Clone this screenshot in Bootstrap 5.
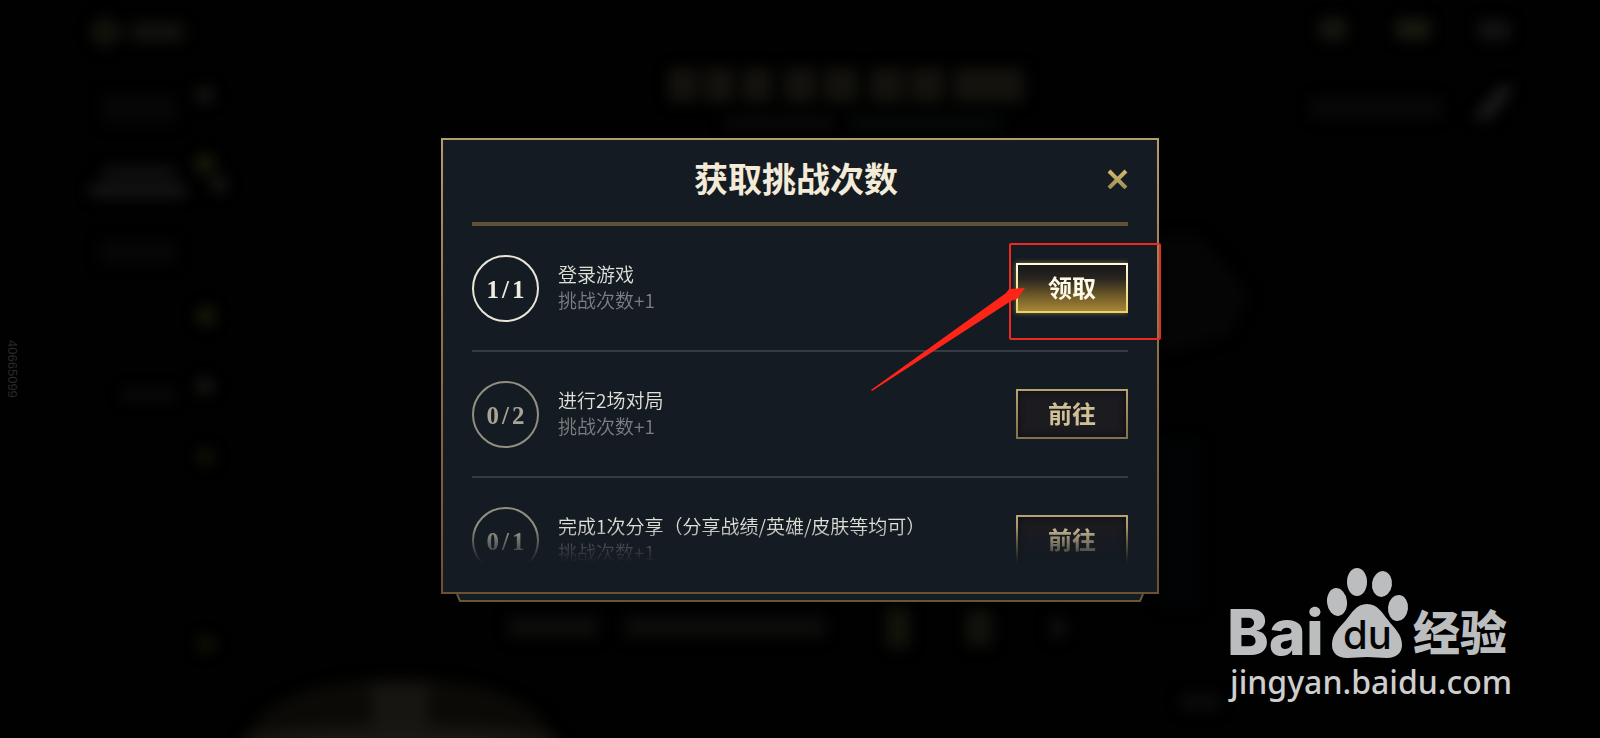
<!DOCTYPE html>
<html lang="zh-CN">
<head>
<meta charset="utf-8">
<meta name="viewport" content="width=device-width, initial-scale=1">
<title>获取挑战次数</title>
<link href="https://cdn.jsdelivr.net/npm/bootstrap@5.3.0/dist/css/bootstrap.min.css" rel="stylesheet">
<style>
  body { background: #010101; font-family: "Noto Sans CJK SC", sans-serif; }
  .scene { isolation: isolate; padding-top: 2px; }
  .backdrop-art { z-index: -1; }
  .serial { left: 3px; top: 340px; writing-mode: vertical-rl; font: 13px/18px "Liberation Sans", sans-serif; color: #2a2a2a; }

  .quest { width: 100%; max-width: 718px; }
  .quest-panel { border: 2px solid; border-image: linear-gradient(#b49c6c, #8e7747 40%, #6a5230) 1; background: #141b23; padding: 0 29px 27px; }
  .quest-head { height: 82px; padding-bottom: 6px; }
  .quest-title { font-size: 34px; line-height: 40px; font-weight: 700; color: #f3ead8; padding-left: 14px; }
  .quest-close { width: 22px; height: 22px; }
  .quest-rule { height: 4px; background: #5e5337; }
  .quest-list { max-height: 339px; -webkit-mask-image: linear-gradient(#000 calc(100% - 38px), transparent calc(100% - 2px)); mask-image: linear-gradient(#000 calc(100% - 38px), transparent calc(100% - 2px)); }
  .quest-row { padding: 29px 0 28px; border-bottom: 2px solid #343b43; gap: 19px; }
  .quest-count { width: 67px; height: 67px; padding-top: 4px; border: 2px solid #918f7e; font: 700 25px/28px "Liberation Serif", serif; color: #a8a596; }
  .quest-count span { padding: 0 3px; }
  .quest-count.is-done { border-color: #e8e5d5; color: #efecdf; }
  .quest-text { padding-bottom: 2px; font-size: 19px; line-height: 26px; font-weight: 350; color: #dfe0d6; }
  .quest-note { color: #7d7f81; }
  .btn-quest { width: 112px; height: 50px; padding: 0 0 2px; border: 2px solid; border-radius: 0; border-image: linear-gradient(#b6a274, #84704a) 1; background: #1c1b20; box-shadow: inset 0 0 6px 1px #0e0f14; color: #cfc096; font-size: 24px; line-height: 42px; font-weight: 700; }
  .btn-quest:hover { color: #e6d7ab; }
  .btn-claim { border-image: linear-gradient(#fff8dc, #f4e29a 55%, #ebd36b) 1; background: linear-gradient(#17171a, #29251f 30%, #6b5828 65%, #a88536); box-shadow: 0 0 5px #80713e; color: #fffae8; }
  .btn-claim:hover { color: #fff; }
  .quest-ledge { display: block; width: calc(100% - 30px); height: 9px; margin: 0 auto; }

  .guide { left: 431px; top: 104px; width: 290px; height: 150px; overflow: visible; }

  .wm { right: 84px; bottom: 30px; width: 290px; color: #bcbdbe; }
  .wm svg { display: block; overflow: visible; }
  .wm-bai { font: 800 63px "Inter", sans-serif; }
  .wm-du { font: 500 40px "Inter", sans-serif; }
  .wm-jy { font: 900 47px "Noto Sans CJK SC", sans-serif; }
  .wm-url { font: 500 32px "Noto Sans", sans-serif; fill: #cecece; }
</style>
</head>
<body>
<main class="scene position-relative min-vh-100 d-flex flex-column align-items-center justify-content-center overflow-hidden">

  <svg class="backdrop-art position-absolute top-0 start-0 w-100 h-100" viewBox="0 0 1600 738" preserveAspectRatio="xMidYMid slice" aria-hidden="true">
    <defs><filter id="soft" x="-20%" y="-20%" width="140%" height="140%" color-interpolation-filters="sRGB"><feGaussianBlur stdDeviation="7"/></filter></defs>
    <g filter="url(#soft)" fill="#0c0c0b">
      <path d="M88 32l20-20v12h14v16h-14v12z" fill="#14140d"/>
      <rect x="132" y="22" width="52" height="20" fill="#11110d"/>
      <rect x="102" y="94" width="74" height="30" fill="#060606"/>
      <rect x="102" y="167" width="74" height="11" fill="#131313"/>
      <rect x="90" y="184" width="96" height="13" fill="#161616"/>
      <rect x="100" y="239" width="76" height="26" fill="#060606"/>
      <rect x="122" y="389" width="54" height="12" fill="#0a0a0a"/>
      <circle cx="205" cy="95" r="9" fill="#161614"/>
      <circle cx="205" cy="164" r="10" fill="#1b1b0c"/>
      <circle cx="219" cy="184" r="9" fill="#161614"/>
      <circle cx="206" cy="316" r="10" fill="#18180b"/>
      <circle cx="205" cy="386" r="9" fill="#161614"/>
      <circle cx="206" cy="457" r="9" fill="#121208"/>
      <circle cx="206" cy="644" r="9" fill="#121207"/>
      <g fill="#13120d">
        <rect x="668" y="68" width="30" height="34"/><rect x="704" y="68" width="30" height="34"/>
        <rect x="742" y="68" width="30" height="34"/><rect x="784" y="68" width="32" height="34"/>
        <rect x="824" y="68" width="34" height="34"/><rect x="870" y="68" width="34" height="34"/>
        <rect x="910" y="68" width="34" height="34"/><rect x="954" y="68" width="70" height="34"/>
      </g>
      <rect x="724" y="116" width="110" height="14" fill="#090909"/>
      <rect x="850" y="116" width="150" height="14" fill="#060a09"/>
      <rect x="1320" y="18" width="26" height="22" fill="#161610"/>
      <rect x="1396" y="19" width="34" height="20" fill="#191911"/>
      <rect x="1478" y="20" width="32" height="20" fill="#121212"/>
      <rect x="1310" y="98" width="132" height="20" fill="#080808"/>
      <path d="M1472 118l30-34 12 4-24 32z" fill="#1b1b1b"/>
      <path d="M1160 235h40l50 60-20 40-70 20z" fill="#050505"/>
      <rect x="508" y="616" width="90" height="22"/><rect x="625" y="616" width="200" height="22"/>
      <rect x="886" y="608" width="24" height="40" fill="#12130b"/>
      <rect x="966" y="610" width="26" height="36" fill="#11120c"/>
      <rect x="1050" y="618" width="16" height="20" fill="#0e0e0e"/>
      <ellipse cx="400" cy="738" rx="150" ry="60" fill="#0b0a07"/>
      <rect x="372" y="684" width="56" height="60" fill="#161511"/>
      <ellipse cx="400" cy="740" rx="160" ry="14" fill="#191714"/>
      <rect x="1180" y="694" width="40" height="16" fill="#0b0b0b"/>
      <rect x="1160" y="440" width="40" height="170" fill="#010304"/>
    </g>
  </svg>

  <div class="serial position-absolute">40665099</div>

  <section class="quest position-relative" role="dialog" aria-labelledby="questTitle">
    <div class="quest-panel">
      <header class="quest-head d-flex align-items-center">
        <h1 id="questTitle" class="quest-title flex-grow-1 text-center mb-0">获取挑战次数</h1>
        <button type="button" class="quest-close btn border-0 p-0 d-flex" aria-label="关闭">
          <svg width="22" height="22" viewBox="0 0 22 22" fill="none" aria-hidden="true">
            <defs><linearGradient id="gold" x1="0" y1="0" x2="0" y2="22" gradientUnits="userSpaceOnUse"><stop stop-color="#dcc36c"/><stop offset="1" stop-color="#a08c55"/></linearGradient></defs>
            <path d="M3 4l17 17M20 4L3 21" stroke="url(#gold)" stroke-width="4"/>
          </svg>
        </button>
      </header>
      <div class="quest-rule"></div>
      <ul class="quest-list list-unstyled mb-0 overflow-hidden">
        <li class="quest-row d-flex align-items-center">
          <div class="quest-count is-done rounded-circle d-flex align-items-center justify-content-center flex-shrink-0">1<span>/</span>1</div>
          <div class="quest-text flex-grow-1"><div>登录游戏</div><div class="quest-note">挑战次数+1</div></div>
          <button type="button" class="btn btn-quest btn-claim flex-shrink-0">领取</button>
        </li>
        <li class="quest-row d-flex align-items-center">
          <div class="quest-count rounded-circle d-flex align-items-center justify-content-center flex-shrink-0">0<span>/</span>2</div>
          <div class="quest-text flex-grow-1"><div>进行2场对局</div><div class="quest-note">挑战次数+1</div></div>
          <button type="button" class="btn btn-quest flex-shrink-0">前往</button>
        </li>
        <li class="quest-row d-flex align-items-center">
          <div class="quest-count rounded-circle d-flex align-items-center justify-content-center flex-shrink-0">0<span>/</span>1</div>
          <div class="quest-text flex-grow-1"><div>完成1次分享（分享战绩/英雄/皮肤等均可）</div><div class="quest-note">挑战次数+1</div></div>
          <button type="button" class="btn btn-quest flex-shrink-0">前往</button>
        </li>
      </ul>
    </div>
    <svg class="quest-ledge" viewBox="0 0 688 9" preserveAspectRatio="none" aria-hidden="true">
      <path d="M1 0l3 7h680l3-7" fill="#141c24" stroke="#6a5637" stroke-width="2"/>
    </svg>

    <svg class="guide position-absolute pe-none" viewBox="0 0 290 150" aria-hidden="true">
      <rect x="138" y="2" width="150" height="95" rx="1" fill="none" stroke="#ee2a20" stroke-width="2"/>
      <path d="M-1 148L134 51l3-4 16-1-8 11-6 2L0 149z" fill="#ff2418"/>
    </svg>
  </section>

  <div class="wm position-absolute">
    <svg width="290" height="144" viewBox="0 0 290 144" fill="currentColor" role="img" aria-label="Bai du 经验 jingyan.baidu.com">
      <text class="wm-bai" x="1" y="91">Bai</text>
      <ellipse cx="111" cy="38" rx="10" ry="14" transform="rotate(-6 111 38)"/>
      <ellipse cx="131" cy="18" rx="10" ry="14"/>
      <ellipse cx="156" cy="20" rx="10" ry="13" transform="rotate(8 156 20)"/>
      <ellipse cx="172" cy="44" rx="10" ry="13" transform="rotate(6 172 44)"/>
      <path d="M141 40c-11 0-15 9-21 16-7 8-14 14-14 25 0 9 7 13 15 13 7 0 13-1 20-1s13 1 20 1c9 0 15-5 15-13 0-11-8-17-14-25-6-7-10-16-21-16z"/>
      <text class="wm-du" x="117" y="85" fill="#050505">du</text>
      <text class="wm-jy" x="187" y="86">经验</text>
      <text class="wm-url" x="4" y="130">jingyan.baidu.com</text>
    </svg>
  </div>
</main>
<script src="https://cdn.jsdelivr.net/npm/bootstrap@5.3.0/dist/js/bootstrap.bundle.min.js"></script>
</body>
</html>
